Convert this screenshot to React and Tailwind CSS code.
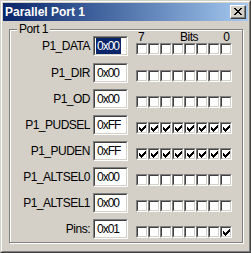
import React from 'react';

const rows = [
  { label: 'P1_DATA', value: '0x00', bits: 0x00, selected: true },
  { label: 'P1_DIR', value: '0x00', bits: 0x00 },
  { label: 'P1_OD', value: '0x00', bits: 0x00 },
  { label: 'P1_PUDSEL', value: '0xFF', bits: 0xff },
  { label: 'P1_PUDEN', value: '0xFF', bits: 0xff },
  { label: 'P1_ALTSEL0', value: '0x00', bits: 0x00 },
  { label: 'P1_ALTSEL1', value: '0x00', bits: 0x00 },
  { label: 'Pins:', value: '0x01', bits: 0x01 },
];

// classic 7x7 check glyph
const CheckMark = () => (
  <svg width="7" height="7" viewBox="0 0 7 7" shapeRendering="crispEdges">
    <path
      d="M6 0h1v3h-1zM5 1h1v3h-1zM4 2h1v3h-1zM3 3h1v3h-1zM2 4h1v3h-1zM1 3h1v3h-1zM0 2h1v3h-1z"
      fill="#000"
    />
  </svg>
);

const CheckBox = ({ checked }) => (
  <div className="w-[12px] h-[12px] border border-t-[#808080] border-l-[#808080] border-r-white border-b-white">
    <div className="w-full h-full border border-t-[#404040] border-l-[#404040] border-r-[#d4d0c8] border-b-[#d4d0c8] bg-white flex items-center justify-center">
      {checked ? <CheckMark /> : null}
    </div>
  </div>
);

const Row = ({ row, first }) => (
  <div className={`flex items-end ${first ? 'mb-[1px]' : ''}`}>
    <div className="w-[80px] h-[20px] flex items-center justify-end text-[12px] tracking-[-0.5px] leading-none text-black">
      {row.label}
    </div>
    <div className="ml-[3px] w-[35px] h-[20px] border border-t-[#808080] border-l-[#808080] border-r-white border-b-white">
      <div className="w-full h-full border border-t-[#404040] border-l-[#404040] border-r-[#d4d0c8] border-b-[#d4d0c8] bg-white flex items-center pl-[1px] text-[12px] tracking-[-1px] leading-none">
        {row.selected ? (
          <span className="bg-[#0a246a] text-white pl-[1px] pr-[2px] py-[2px]">{row.value}</span>
        ) : (
          <span className="pl-[1px]">{row.value}</span>
        )}
      </div>
    </div>
    <div className="ml-[8px] flex flex-col mb-[1px]">
      {first && (
        <div className="h-[10px] flex justify-between items-center text-[12px] leading-none pl-[2px] pr-[2px] mb-[1px]">
          <span>7</span>
          <span className="ml-[10px] tracking-[-0.5px]">Bits</span>
          <span>0</span>
        </div>
      )}
      <div className="flex">
        {[7, 6, 5, 4, 3, 2, 1, 0].map(b => (
          <CheckBox key={b} checked={((row.bits >> b) & 1) === 1} />
        ))}
      </div>
    </div>
  </div>
);

const App = () => {
  return (
    <div
      className="w-[251px] h-[253px] border border-t-[#d4d0c8] border-l-[#d4d0c8] border-r-[#404040] border-b-[#404040] bg-[#d4d0c8] select-none"
      style={{ fontFamily: '"Liberation Sans", Arial, sans-serif' }}
    >
      <div className="w-full h-full border border-t-white border-l-white border-r-[#808080] border-b-[#808080] p-[1px] flex flex-col">
        {/* title bar */}
        <div className="h-[18px] flex items-center justify-between bg-gradient-to-r from-[#0a246a] to-[#a6caf0] pl-[2px] pr-[2px]">
          <span className="text-white font-bold text-[12px] leading-none">Parallel Port 1</span>
          <div className="w-[16px] h-[14px] border border-t-white border-l-white border-r-[#404040] border-b-[#404040] bg-[#d4d0c8]">
            <div className="w-full h-full border-r border-b border-[#808080] flex items-center justify-center">
              <svg width="8" height="7" viewBox="0 0 8 7" shapeRendering="crispEdges">
                <path
                  d="M0 0h2v1h-2zM6 0h2v1h-2zM1 1h2v1h-2zM5 1h2v1h-2zM2 2h4v1h-4zM3 3h2v1h-2zM2 4h4v1h-4zM1 5h2v1h-2zM5 5h2v1h-2zM0 6h2v1h-2zM6 6h2v1h-2z"
                  fill="#000"
                />
              </svg>
            </div>
          </div>
        </div>

        {/* group box */}
        <div className="relative mt-[8px] ml-[6px] w-[234px] h-[214px] border border-[#808080] shadow-[inset_1px_1px_0_#fff,1px_1px_0_#fff]">
          <span className="absolute left-[7px] top-[-7px] px-[2px] bg-[#d4d0c8] text-[12px] tracking-[-0.5px] leading-[13px]">
            Port 1
          </span>
          <div className="flex flex-col gap-[6px] pt-[2px]">
            {rows.map((row, i) => (
              <Row key={row.label} row={row} first={i === 0} />
            ))}
          </div>
        </div>
      </div>
    </div>
  );
};

export default App;
